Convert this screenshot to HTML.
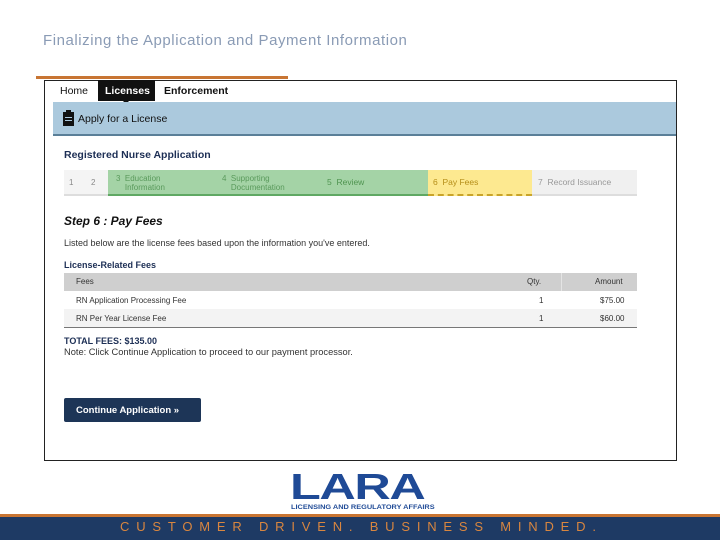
<!DOCTYPE html>
<html><head><style>
*{margin:0;padding:0;box-sizing:border-box}
body{width:720px;height:540px;background:#fff;position:relative;font-family:"Liberation Sans",sans-serif;overflow:hidden}
.a{position:absolute}
.t{font-size:10px;color:#333;white-space:nowrap}
</style></head><body>
<div class="a" style="left:43px;top:32px;font-size:15px;color:#8a9bb5;letter-spacing:0.55px">Finalizing the Application and Payment Information</div>
<div class="a" style="left:36px;top:76px;width:252px;height:3px;background:#c87533"></div>
<div class="a" style="left:44px;top:80px;width:633px;height:381px;border:1px solid #222"></div>
<div class="a t" style="left:60px;top:85px;font-size:10.5px;color:#111">Home</div>
<div class="a" style="left:98px;top:80px;width:57px;height:21px;background:#111"></div>
<div class="a t" style="left:105px;top:85px;font-size:10.5px;color:#fff;font-weight:bold">Licenses</div>
<div class="a" style="left:122px;top:100px;width:0;height:0;border-left:4px solid transparent;border-right:4px solid transparent;border-top:4px solid #111"></div>
<div class="a t" style="left:164px;top:85px;font-size:10.5px;color:#111;font-weight:bold">Enforcement</div>
<div class="a" style="left:53px;top:102px;width:623px;height:34px;background:#abc9dd;border-bottom:2px solid #5a7f98"></div>
<div class="a" style="left:63px;top:112px;width:11px;height:14px;background:#111"></div>
<div class="a" style="left:66px;top:110px;width:5px;height:3px;background:#111"></div>
<div class="a" style="left:65px;top:117px;width:7px;height:1px;background:#abc9dd"></div>
<div class="a" style="left:65px;top:120px;width:7px;height:1px;background:#abc9dd"></div>
<div class="a t" style="left:78px;top:113px;font-size:10.5px;color:#111">Apply for a License</div>
<div class="a t" style="left:64px;top:149px;font-size:10.5px;font-weight:bold;color:#1d2f55">Registered Nurse Application</div>
<div class="a" style="left:64px;top:170px;width:44px;height:26px;background:#f4f4f4;border-bottom:2px solid #ddd"></div>
<div class="a t" style="left:69px;top:178px;font-size:8px;color:#888">1</div>
<div class="a t" style="left:91px;top:178px;font-size:8px;color:#888">2</div>
<div class="a" style="left:108px;top:170px;width:320px;height:26px;background:#a4d3a6;border-bottom:2px solid #5fa863"></div>
<div class="a t" style="left:116px;top:174px;font-size:8px;color:#5a9a5c;line-height:9px">3 &nbsp;Education<br>&nbsp;&nbsp;&nbsp;&nbsp;Information</div>
<div class="a t" style="left:222px;top:174px;font-size:8px;color:#5a9a5c;line-height:9px">4 &nbsp;Supporting<br>&nbsp;&nbsp;&nbsp;&nbsp;Documentation</div>
<div class="a t" style="left:327px;top:177px;font-size:8.5px;color:#4f9450">5 &nbsp;Review</div>
<div class="a" style="left:428px;top:170px;width:104px;height:26px;background:#fde990;border-bottom:2px dashed #c9a42a"></div>
<div class="a t" style="left:433px;top:177px;font-size:8.5px;color:#b58e18">6 &nbsp;Pay Fees</div>
<div class="a" style="left:532px;top:170px;width:105px;height:26px;background:#f0f0f0;border-bottom:2px solid #ddd"></div>
<div class="a t" style="left:538px;top:177px;font-size:8.5px;color:#999">7 &nbsp;Record Issuance</div>
<div class="a t" style="left:64px;top:214px;font-size:12px;font-weight:bold;font-style:italic;color:#111">Step 6 : Pay Fees</div>
<div class="a t" style="left:64px;top:238px;font-size:9px">Listed below are the license fees based upon the information you've entered.</div>
<div class="a t" style="left:64px;top:260px;font-size:9px;font-weight:bold;color:#1d2f55">License-Related Fees</div>
<div class="a" style="left:64px;top:273px;width:573px;height:18px;background:#cfcfcf"></div>
<div class="a" style="left:561px;top:273px;width:1px;height:18px;background:#e4e4e4"></div>
<div class="a t" style="left:76px;top:277px;font-size:8px">Fees</div>
<div class="a t" style="left:527px;top:277px;font-size:8px">Qty.</div>
<div class="a t" style="left:595px;top:277px;font-size:8px">Amount</div>
<div class="a t" style="left:76px;top:296px;font-size:8px">RN Application Processing Fee</div>
<div class="a t" style="left:539px;top:296px;font-size:8px">1</div>
<div class="a t" style="left:600px;top:296px;font-size:8px">$75.00</div>
<div class="a" style="left:64px;top:309px;width:573px;height:19px;background:#f3f3f3;border-bottom:1px solid #777"></div>
<div class="a t" style="left:76px;top:314px;font-size:8px">RN Per Year License Fee</div>
<div class="a t" style="left:539px;top:314px;font-size:8px">1</div>
<div class="a t" style="left:600px;top:314px;font-size:8px">$60.00</div>
<div class="a t" style="left:64px;top:336px;font-size:9px;font-weight:bold;color:#1d2f55">TOTAL FEES: $135.00</div>
<div class="a t" style="left:64px;top:347px;font-size:9.3px">Note: Click Continue Application to proceed to our payment processor.</div>
<div class="a" style="left:64px;top:398px;width:137px;height:24px;background:#1d3557;border-radius:2px"></div>
<div class="a t" style="left:76px;top:405px;font-size:9.5px;font-weight:bold;color:#fff">Continue Application »</div>
<div class="a t" style="left:290px;top:470px;font-size:36px;font-weight:bold;color:#1f4a96;line-height:34px;transform:scaleX(1.4);transform-origin:0 0;letter-spacing:-1px">LARA</div>
<div class="a t" style="left:291px;top:504px;font-size:6.3px;color:#1f4a96;font-weight:bold;transform:scaleX(1.17);transform-origin:0 0">LICENSING AND REGULATORY AFFAIRS</div>
<div class="a" style="left:0;top:514px;width:720px;height:3px;background:#c87533"></div>
<div class="a" style="left:0;top:517px;width:720px;height:23px;background:#1e3a64"></div>
<div class="a t" style="left:120px;top:519px;font-size:13px;color:#d9863f;letter-spacing:6.8px">CUSTOMER DRIVEN. BUSINESS MINDED.</div>
</body></html>
